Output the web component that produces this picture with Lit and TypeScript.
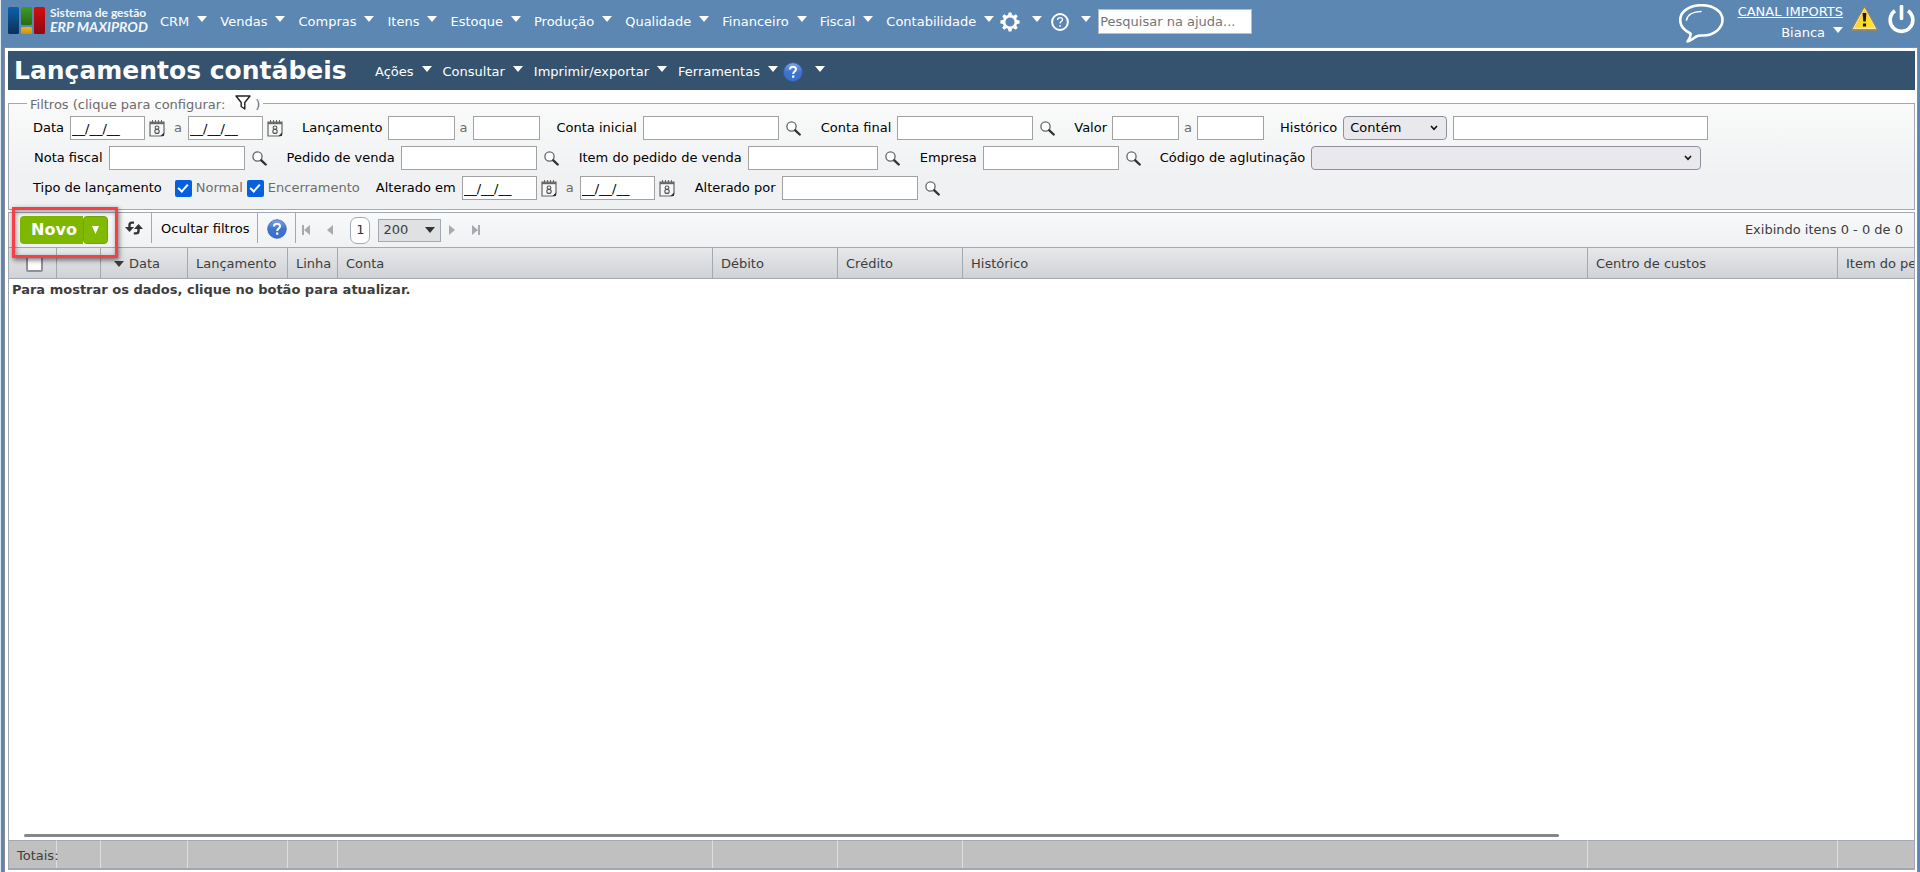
import { LitElement, html, css, svg, nothing } from "lit";
import { customElement } from "lit/decorators.js";

const arrow = html`<svg class="arrow" width="10" height="6" viewBox="0 0 10 6" aria-hidden="true"><path d="M0 0h10L5 6z" fill="currentColor" /></svg>`;

const chevron = html`<svg class="chevron" width="8" height="6" viewBox="0 0 8 6" aria-hidden="true"><path d="M1 1l3 3.4L7 1" fill="none" stroke="#111" stroke-width="1.6" /></svg>`;

const lensIcon = html`<svg width="15" height="15" viewBox="0 0 15 15" aria-hidden="true">
  <circle cx="5.5" cy="5.5" r="4.6" fill="#fff" stroke="#666" stroke-width="1.3" />
  <path d="M9.3 9.3l4.4 4.2" stroke="#333" stroke-width="2.4" stroke-linecap="round" />
</svg>`;

const calendarIcon = html`<svg width="16" height="18" viewBox="0 0 16 18" aria-hidden="true">
  <path d="M1 3h14v12l-2 2H1z" fill="#f7f7f7" stroke="#666" stroke-width="1.2" />
  <path d="M1 3.2h14v2H1z" fill="#666" />
  <path d="M3.5 1v3M6.5 1v3M9.5 1v3M12.5 1v3" stroke="#666" stroke-width="1" />
  <path d="M15 13.500l-3.500 3.500h3.500z" fill="#333" />
  <ellipse cx="8" cy="8.7" rx="1.9" ry="1.7" fill="none" stroke="#555" stroke-width="1.1" />
  <ellipse cx="8" cy="12.4" rx="2.2" ry="2" fill="none" stroke="#555" stroke-width="1.1" />
</svg>`;

const helpBall = (id: string) => html`<svg width="20" height="20" viewBox="0 0 20 20" aria-hidden="true">
  <defs>
    <linearGradient id=${id} x1="0" y1="0" x2="0" y2="1">
      <stop offset="0" stop-color="#7ba6ea" />
      <stop offset="0.5" stop-color="#3f74cc" />
      <stop offset="1" stop-color="#3a70cc" />
    </linearGradient>
  </defs>
  <circle cx="10" cy="10" r="9.3" fill="url(#${id})" stroke="#3563b4" stroke-width="0.8" />
  <path d="M7 7.4C7 5.6 8.3 4.8 10 4.8s3 .9 3 2.5c0 1.300-.8 1.900-1.600 2.500-.8.600-1.200 1-1.200 2.100" fill="none" stroke="#fff" stroke-width="2" />
  <rect x="9.1" y="13.500" width="2.200" height="2.200" fill="#fff" />
</svg>`;

const gearIcon = html`<svg width="20" height="20" viewBox="0 0 20 20" aria-hidden="true">
  <circle cx="10" cy="10" r="5.900" fill="none" stroke="#fff" stroke-width="2.600" />
  ${[0, 45, 90, 135, 180, 225, 270, 315].map(
    (a) => svg`<path d="M7.800 4l.8-3.600h2.800L12.200 4z" fill="#fff" transform="rotate(${a} 10 10)" />`
  )}
</svg>`;

const questionIcon = html`<svg width="18" height="18" viewBox="0 0 18 18" aria-hidden="true">
  <circle cx="9" cy="9" r="7.900" fill="none" stroke="#fff" stroke-width="2" />
  <path d="M6.500 7C6.500 5.400 7.600 4.600 9 4.600s2.500.8 2.500 2.100c0 1-.7 1.500-1.400 1.900-.7.400-1 .9-1 1.800" fill="none" stroke="#fff" stroke-width="1.300" />
  <circle cx="9.100" cy="12.900" r="0.900" fill="#fff" />
</svg>`;

interface Field {
  label: string;
  kind: "date" | "range" | "lookup" | "narrow" | "select-text" | "select";
}

const rows: Field[][] = [
  [
    { label: "Data", kind: "date" },
    { label: "Lançamento", kind: "range" },
    { label: "Conta inicial", kind: "lookup" },
    { label: "Conta final", kind: "lookup" },
    { label: "Valor", kind: "range" },
    { label: "Histórico", kind: "select-text" },
  ],
  [
    { label: "Nota fiscal", kind: "lookup" },
    { label: "Pedido de venda", kind: "lookup" },
    { label: "Item do pedido de venda", kind: "narrow" },
    { label: "Empresa", kind: "lookup" },
    { label: "Código de aglutinação", kind: "select" },
  ],
];

const mainMenu = ["CRM", "Vendas", "Compras", "Itens", "Estoque", "Produção", "Qualidade", "Financeiro", "Fiscal", "Contabilidade"];
const pageMenu = ["Ações", "Consultar", "Imprimir/exportar", "Ferramentas"];

const columns = [
  { title: "", cls: "c-check" },
  { title: "", cls: "c-actions" },
  { title: "Data", cls: "c-date" },
  { title: "Lançamento", cls: "c-entry" },
  { title: "Linha", cls: "c-line" },
  { title: "Conta", cls: "c-account" },
  { title: "Débito", cls: "c-money" },
  { title: "Crédito", cls: "c-money" },
  { title: "Histórico", cls: "c-history" },
  { title: "Centro de custos", cls: "c-wide" },
  { title: "Item do pedido de venda", cls: "c-wide" },
];

@customElement("app-root")
export class AppRoot extends LitElement {
  static styles = css`
    :host {
      display: flex;
      flex-direction: column;
      min-height: 100vh;
      box-sizing: border-box;
      padding: 0 2px 0 3px;
      background: #5b87b2;
      border-left: 1px solid #dfe7ef;
      font: 13px/16px "DejaVu Sans", Verdana, sans-serif;
      color: #3d3d3d;
    }
    *, *::before, *::after { box-sizing: border-box; }
    button, input, select { font: inherit; color: inherit; margin: 0; }
    button { border: 0; padding: 0; background: none; cursor: pointer; }
    svg { display: block; flex: none; }

    .top {
      display: flex;
      align-items: flex-start;
      height: 47px;
      padding: 0 3px 0 4px;
      color: #fff;
    }
    .brand { display: flex; gap: 4px; padding-top: 7px; width: 152px; color: #f2f6fa; text-decoration: none; }
    .brand-text { display: flex; flex-direction: column; font: bold 12px/11px Lato, sans-serif; white-space: nowrap; }
    .brand-text em { font-size: 14px; line-height: 18px; }
    .menu { display: flex; align-items: center; gap: 13px; height: 44px; }
    .menu-item { display: flex; align-items: center; gap: 8px; white-space: nowrap; }
    .arrow { margin-bottom: 6px; }
    .menu-icon { gap: 12px; }
    .tools { gap: 9px; padding-left: 6px; }
    .search {
      width: 154px;
      height: 25px;
      margin: 9px 0 0 7px;
      padding: 0 1px;
      border: 1px solid #b9bdc4;
      background: #fff;
      color: #333;
    }
    .search::placeholder { color: #757575; opacity: 1; }
    .account { display: flex; align-items: flex-start; margin-left: auto; }
    .bubble { padding-top: 4px; }
    .who { display: flex; flex-direction: column; align-items: flex-end; gap: 5px; padding: 4px 7px 0 14px; }
    .who a { color: #fff; }
    .warning { padding-top: 5px; }
    .power { padding: 5px 0 0 9px; }

    .page {
      flex: 1;
      display: flex;
      flex-direction: column;
      min-width: 0;
      padding: 3px 2px 2px 3px;
      border: 1px solid #888a90;
      border-bottom: 0;
      background: #fff;
    }
    .title-bar {
      display: flex;
      align-items: center;
      height: 39px;
      padding: 0 6px;
      background: #35526f;
      color: #fff;
    }
    h1 { margin: 0; width: 361px; font-size: 25px; line-height: 38px; white-space: nowrap; }
    .page-menu { display: flex; align-items: center; gap: 11px; padding-top: 2px; }
    .page-menu .help { gap: 12px; margin-left: -6px; }

    fieldset {
      margin: 3px 0 2px;
      padding: 3px 24px 9px;
      border: 1px solid #a3a9b2;
      background: linear-gradient(#f9faf9, #f0f1f3 70%);
      min-width: 0;
    }
    legend { display: flex; align-items: center; height: 20px; margin-left: -6px; padding: 3px 3px 0; color: #6c6c6c; }
    .funnel { margin: 0 4px 4px 10px; }
    .filters { display: flex; flex-direction: column; gap: 6px; color: #000; }
    .filter-row { display: flex; align-items: center; gap: 16px; height: 24px; white-space: nowrap; }
    .field { display: flex; align-items: center; gap: 6px; }
    .field.range { gap: 5px; }
    .field.date-range, .field.lookup-field { padding-right: 3px; }
    .lookup-field label, .lookup-field button { padding: 0 0 0 1px; }
    .date-range .to { margin-left: 3px; }
    .kind { padding-right: 7px; }
    .to { color: #6c6c6c; }
    .box { height: 24px; padding: 0 1px; border: 1px solid #a2a2a2; background: #fff; }
    .date { width: 75px; }
    .number { width: 67px; }
    .lookup { width: 136px; }
    .narrow { width: 130px; }
    .free { width: 255px; }
    .pair { display: flex; align-items: center; gap: 4px; }
    .checks { display: flex; align-items: center; gap: 4px; color: #6c6c6c; }
    .checks label { display: flex; align-items: center; gap: 4px; }
    .tick {
      appearance: none;
      width: 17px;
      height: 17px;
      border-radius: 2px;
      background: #0560df;
      display: grid;
      place-items: center;
    }
    .tick::after {
      content: "";
      width: 6px;
      height: 10px;
      margin-bottom: 3px;
      border: solid #fff;
      border-width: 0 2px 2px 0;
      transform: rotate(42deg);
    }
    .picker { position: relative; display: flex; align-items: center; }
    .picker select { appearance: none; height: 24px; padding: 0 6px; border: 1px solid #8f8f9d; border-radius: 4px; background: #e9e9ed; }
    .picker .chevron { position: absolute; right: 9px; pointer-events: none; }
    .picker .mode { width: 104px; }
    .picker .code { width: 390px; }

    .grid { flex: 1; position: relative; display: flex; flex-direction: column; min-width: 0; border: 1px solid #a3a9b2; border-bottom: 2px solid #a0a6b4; }
    .toolbar {
      display: flex;
      height: 34px;
      padding: 0 11px;
      background: linear-gradient(#f8f9f9, #f0f1f3);
    }
    .toolbar > * { flex: none; }
    .split { display: flex; width: 88px; height: 28px; margin-top: 3px; color: #fff; }
    .new { flex: 1; padding-left: 5px; border-radius: 4px 0 0 4px; background: #7db700; font-size: 16px; font-weight: bold; }
    .new-more { width: 25px; border: 1px solid #72a500; border-radius: 4px; background: #82ba02; display: grid; place-items: center; }
    .refresh { width: 44px; height: 30px; padding-left: 8px; display: grid; place-items: center; border-right: 1px solid #a3a9b2; }
    .bar-cell { border-right: 1px solid #a3a9b2; color: #000; padding: 2px 8px 0 9px; height: 30px; }
    .pager { display: flex; align-items: center; padding-left: 6px; }
    .pager button { width: 8px; margin-right: 16px; display: grid; place-items: center; }
    .pager .current { width: 20px; height: 27px; margin: 0 8px 0 0; border: 1px solid #a3a9b2; border-radius: 7px; background: #fff; color: #333; }
    .picker.size select { width: 63px; height: 23px; padding: 0 4px; border-color: #a3a9b2; border-radius: 0; background: #dfe1e3; }
    .size .arrow { position: absolute; right: 6px; margin: 0; color: #333; pointer-events: none; }
    .size { margin-right: 7px; }
    .count { margin-left: auto; line-height: 34px; }

    .scroll { overflow: hidden; }
    table { width: 2079px; border-collapse: separate; border-spacing: 0; table-layout: fixed; }
    .c-check { width: 48px; }
    .c-actions { width: 44px; }
    .c-date { width: 87px; }
    .c-entry { width: 100px; }
    .c-line { width: 50px; }
    .c-account { width: 375px; }
    .c-money { width: 125px; }
    .c-history { width: 625px; }
    .c-wide { width: 250px; }
    th {
      height: 32px;
      padding: 1px 0 0 8px;
      border: solid #a3a9b2;
      border-width: 1px 1px 1px 0;
      background: linear-gradient(#e7e8ea, #d0d2d6);
      font-weight: normal;
      text-align: left;
      white-space: nowrap;
    }
    .sort { display: flex; align-items: center; gap: 5px; margin-left: 5px; }
    .sort .arrow { margin: 0; }
    .all { appearance: none; display: block; width: 17px; height: 17px; margin-left: 9px; border: 2px solid #8f8f9d; border-radius: 2px; background: #fff; }
    .empty { padding: 3px; font-weight: bold; }
    .track { margin-top: auto; padding: 0 355px 3px 15px; }
    .thumb { height: 3px; background: #868686; border-radius: 2px; }
    .totals td {
      height: 28px;
      padding: 2px 0 0 8px;
      border-top: 1px solid #a3a9b2;
      border-right: 1px solid #dcdddf;
      background: #c0c0c0;
      white-space: nowrap;
    }
    .mark {
      position: absolute;
      left: 3px;
      top: -6px;
      width: 106px;
      height: 51px;
      border: 3px solid #f93f45;
      box-shadow: 1px 2px 5px rgba(0, 0, 0, 0.55), inset 1px 2px 5px rgba(0, 0, 0, 0.4);
      pointer-events: none;
    }
  `;

  private menuItem(text: string) {
    return html`<button class="menu-item">${text}${arrow}</button>`;
  }

  private dateBox(id: string, label: string) {
    return html`<span class="pair">
      <input class="box date" id=${id} aria-label=${label} value="__/__/__" />
      <button aria-label="Abrir calendário">${calendarIcon}</button>
    </span>`;
  }

  private control(f: Field, id: string) {
    switch (f.kind) {
      case "date":
        return html`${this.dateBox(id, f.label)}<span class="to">a</span>${this.dateBox(id + "-b", f.label + " final")}`;
      case "range":
        return html`<input class="box number" id=${id} /><span class="to">a</span><input class="box number" aria-label="${f.label} final" />`;
      case "select-text":
        return html`<span class="picker"><select class="mode" id=${id}><option>Contém</option></select>${chevron}</span>
          <input class="box free" aria-label="Texto do histórico" />`;
      case "select":
        return html`<span class="picker"><select class="code" id=${id}><option></option></select>${chevron}</span>`;
      default:
        return html`<input class="box ${f.kind}" id=${id} /><button aria-label="Procurar">${lensIcon}</button>`;
    }
  }

  private field(f: Field, id: string) {
    const group = { date: "date-range", range: "range", lookup: "lookup-field", narrow: "lookup-field", "select-text": "", select: "" }[f.kind];
    return html`<div class="field ${group}"><label for=${id}>${f.label}</label>${this.control(f, id)}</div>`;
  }

  private cols() {
    return html`<colgroup>${columns.map((c) => html`<col class=${c.cls} />`)}</colgroup>`;
  }

  private header() {
    return html`<header class="top">
      <a class="brand" href="#">
        <svg width="38" height="28" viewBox="0 0 38 28" aria-hidden="true">
          <defs>
            <linearGradient id="lb" x1="0" y1="0" x2="0" y2="1"><stop offset="0" stop-color="#0a62ac" /><stop offset="1" stop-color="#0a3157" /></linearGradient>
            <linearGradient id="lg" x1="0" y1="0" x2="0" y2="1"><stop offset="0" stop-color="#3d9c20" /><stop offset="1" stop-color="#2a6b14" /></linearGradient>
            <linearGradient id="ly" x1="0" y1="0" x2="0" y2="1"><stop offset="0" stop-color="#f0b61c" /><stop offset="1" stop-color="#c98f10" /></linearGradient>
            <linearGradient id="lr" x1="0" y1="0" x2="0" y2="1"><stop offset="0" stop-color="#d80a12" /><stop offset="1" stop-color="#8a0a10" /></linearGradient>
          </defs>
          <rect x="0" y="0" width="11" height="27" rx="1.500" fill="url(#lb)" />
          <rect x="13" y="0" width="11" height="18" rx="1.500" fill="url(#lg)" />
          <rect x="13" y="20" width="11" height="7" rx="1.500" fill="url(#ly)" />
          <rect x="26" y="0" width="11" height="27" rx="1.500" fill="url(#lr)" />
        </svg>
        <span class="brand-text"><span>Sistema de gestão</span><em>ERP MAXIPROD</em></span>
      </a>
      <nav class="menu">${mainMenu.map((m) => this.menuItem(m))}</nav>
      <div class="menu tools">
        <button class="menu-item menu-icon" aria-label="Configurações">${gearIcon}${arrow}</button>
        <button class="menu-item menu-icon" aria-label="Ajuda">${questionIcon}${arrow}</button>
      </div>
      <input class="search" aria-label="Pesquisar na ajuda" placeholder="Pesquisar na ajuda..." />
      <div class="account">
        <button class="bubble" aria-label="Mensagens">
          <svg width="45" height="39" viewBox="0 0 45 39" aria-hidden="true">
            <path d="M22.500 1.200C34.500 1.200 43.500 7.500 43.500 16S34.500 31.500 24 31.500c-3 0-4.500-.3-6.500.8-3 2-6 4.600-9 5.200 1.500-2.200 3.600-4.600 3-8C5.500 26.500 1.200 22 1.200 16 1.200 7.500 10.500 1.200 22.500 1.200z" fill="none" stroke="#fff" stroke-width="2.600" stroke-linejoin="round" />
            <path d="M7.500 16C8.500 11 14 7.700 22 7.500" fill="none" stroke="#fff" stroke-width="1.600" stroke-linecap="round" />
          </svg>
        </button>
        <div class="who">
          <a href="#">CANAL IMPORTS</a>
          <button class="menu-item">Bianca${arrow}</button>
        </div>
        <button class="warning" aria-label="Avisos">
          <svg width="29" height="27" viewBox="0 0 29 27" aria-hidden="true">
            <defs><linearGradient id="wy" x1="0" y1="0" x2="1" y2="1"><stop offset="0" stop-color="#f6a81c" /><stop offset="0.500" stop-color="#ffd92a" /><stop offset="1" stop-color="#ffee20" /></linearGradient></defs>
            <path d="M14.500 1.500L27.500 25H1.500z" fill="url(#wy)" stroke="#8f8672" stroke-width="2" stroke-linejoin="round" />
            <path d="M14.500 3.500L25.700 23.600H3.300z" fill="none" stroke="#fbe9b8" stroke-width="1" />
            <path d="M12.600 8h3.800l-.7 8.500h-2.400zM12.900 18.500h3.200v3h-3.200z" fill="#1d1a10" />
          </svg>
        </button>
        <button class="power" aria-label="Sair">
          <svg width="27" height="29" viewBox="0 0 27 29" aria-hidden="true">
            <path d="M7 5.800A11.300 11.300 0 1 0 20 5.800" fill="none" stroke="#fff" stroke-width="3.600" />
            <path d="M13.500 1.500v12" stroke="#fff" stroke-width="3.600" stroke-linecap="round" />
          </svg>
        </button>
      </div>
    </header>`;
  }

  private filterPanel() {
    return html`<fieldset>
      <legend>
        Filtros (clique para configurar:
        <button class="funnel" aria-label="Configurar filtros">
          <svg width="16" height="15" viewBox="0 0 16 15" aria-hidden="true"><path d="M1 1h14L9.800 7.500V14L6.200 11.500v-4z" fill="#fff" stroke="#222" stroke-width="1.400" stroke-linejoin="round" /></svg>
        </button>)
      </legend>
      <div class="filters">
        ${rows.map((r, i) => html`<div class="filter-row">${r.map((f, j) => this.field(f, `f${i}-${j}`))}</div>`)}
        <div class="filter-row">
          <div class="field">
            <span class="kind">Tipo de lançamento</span>
            <span class="checks">
              <label><input class="tick" type="checkbox" checked />Normal</label>
              <label><input class="tick" type="checkbox" checked />Encerramento</label>
            </span>
          </div>
          ${this.field({ label: "Alterado em", kind: "date" }, "changed")}
          ${this.field({ label: "Alterado por", kind: "lookup" }, "author")}
        </div>
      </div>
    </fieldset>`;
  }

  private pageArrow(label: string, d: string) {
    return html`<button aria-label=${label}><svg width="8" height="10" viewBox="0 0 8 10" aria-hidden="true"><path d=${d} fill="#a7abb0" /></svg></button>`;
  }

  private toolbar() {
    return html`<div class="toolbar">
      <div class="split">
        <button class="new">Novo</button>
        <button class="new-more" aria-label="Mais opções"><svg width="7" height="8" viewBox="0 0 7 8" aria-hidden="true"><path d="M0 0h7L3.500 8z" fill="#fff" /></svg></button>
      </div>
      <button class="refresh" aria-label="Atualizar">
        <svg width="18" height="14" viewBox="0 0 18 14" aria-hidden="true">
          <path d="M9 1.600H7Q4.500 1.600 4.500 4v4" fill="none" stroke="#333" stroke-width="2.400" />
          <path d="M0 6h9L4.500 11z" fill="#333" />
          <path d="M8.800 12.400H11q2.500 0 2.500-2.400V6" fill="none" stroke="#333" stroke-width="2.400" />
          <path d="M9 8h9L13.500 3z" fill="#333" />
        </svg>
      </button>
      <button class="bar-cell">Ocultar filtros</button>
      <button class="bar-cell" aria-label="Ajuda da tela">${helpBall("hb-grid")}</button>
      <div class="pager">
        ${this.pageArrow("Primeira página", "M0 0h2v10H0zM8 0v10L2 5z")}
        ${this.pageArrow("Página anterior", "M7 0v10L1 5z")}
        <button class="current">1</button>
        <span class="picker size"><select aria-label="Itens por página"><option>200</option></select>${arrow}</span>
        ${this.pageArrow("Próxima página", "M1 0v10L7 5z")}
        ${this.pageArrow("Última página", "M6 0h2v10H6zM0 0v10L6 5z")}
      </div>
      <span class="count">Exibindo itens 0 - 0 de 0</span>
    </div>`;
  }

  render() {
    return html`
      ${this.header()}
      <main class="page">
        <div class="title-bar">
          <h1>Lançamentos contábeis</h1>
          <nav class="page-menu">
            ${pageMenu.map((m) => this.menuItem(m))}
            <button class="menu-item help" aria-label="Ajuda">${helpBall("hb-title")}${arrow}</button>
          </nav>
        </div>
        ${this.filterPanel()}
        <section class="grid">
          ${this.toolbar()}
          <div class="scroll">
            <table>
              ${this.cols()}
              <thead>
                <tr>
                  ${columns.map(
                    (c, i) => html`<th>
                      ${i === 0
                        ? html`<input class="all" type="checkbox" aria-label="Selecionar todos" />`
                        : c.title === "Data"
                          ? html`<span class="sort">${arrow}Data</span>`
                          : c.title || nothing}
                    </th>`
                  )}
                </tr>
              </thead>
              <tbody>
                <tr><td class="empty" colspan="11">Para mostrar os dados, clique no botão para atualizar.</td></tr>
              </tbody>
            </table>
          </div>
          <div class="track"><div class="thumb"></div></div>
          <div class="scroll totals">
            <table>
              ${this.cols()}
              <tbody><tr>${columns.map((_, i) => html`<td>${i === 0 ? "Totais:" : nothing}</td>`)}</tr></tbody>
            </table>
          </div>
          <div class="mark"></div>
        </section>
      </main>
    `;
  }
}
